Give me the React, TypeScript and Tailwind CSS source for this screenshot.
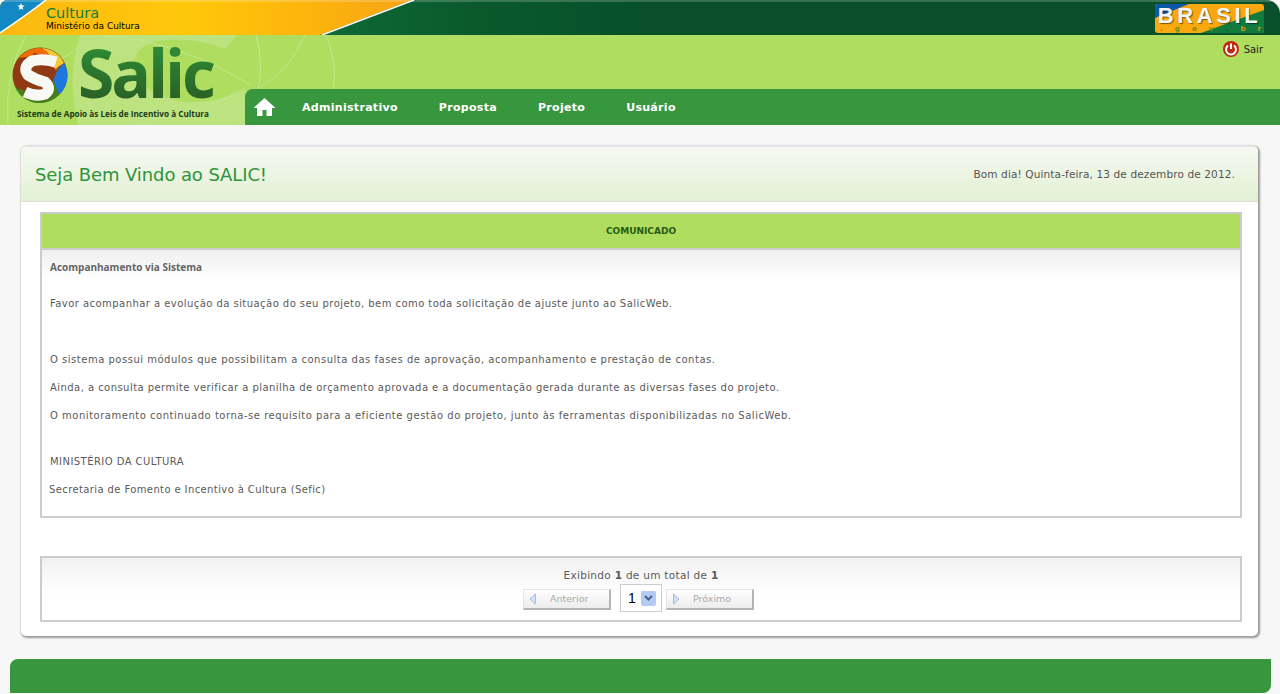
const font = { fontFamily: '"DejaVu Sans", Verdana, sans-serif' };
const openSans = { fontFamily: '"Open Sans", sans-serif' };

const TopBanner = () => (
  <div className="relative h-[35px] bg-[#07502a] overflow-hidden flex justify-between rounded-tl-[8px] rounded-tr-[14px]">
    <svg className="absolute left-0 top-0" width="640" height="35" viewBox="0 0 640 35">
      <defs>
        <linearGradient id="ouro" x1="0" y1="0" x2="1" y2="0">
          <stop offset="0" stopColor="#fbb812" />
          <stop offset="0.45" stopColor="#ffc80a" />
          <stop offset="0.75" stopColor="#fdb40c" />
          <stop offset="1" stopColor="#f7a414" />
        </linearGradient>
        <linearGradient id="mata" x1="0" y1="0" x2="1" y2="0">
          <stop offset="0" stopColor="#0f6a36" />
          <stop offset="0.45" stopColor="#0a5a2d" />
          <stop offset="1" stopColor="#07502a" />
        </linearGradient>
      </defs>
      <path d="M412 0H640V35H324Z" fill="url(#mata)" />
      <path d="M0 0H412L320 35H0Z" fill="url(#ouro)" />
      <path d="M414 0L322 35" stroke="#fff" strokeWidth="1.5" fill="none" />
      <path d="M0 33V0H46Q28 14 0 33Z" fill="#1389c4" />
      <path d="M46 0Q28 14 0 33" stroke="#fff" strokeWidth="1.5" fill="none" />
      <path d="M21 3l1 2.600 2.700 0-2.200 1.700 .8 2.700-2.300-1.600-2.300 1.600 .8-2.700-2.200-1.700 2.700 0z" fill="#fff" />
    </svg>
    <div className="absolute left-0 right-0 top-0 h-[2px] bg-white/20" />
    <div className="relative ml-[46px] mt-[5px] flex flex-col">
      <span className="text-[14.500px] leading-[16px] text-[#0f7d3c]" style={font}>Cultura</span>
      <span className="text-[9px] leading-[10px] text-black" style={font}>Ministério da Cultura</span>
    </div>
    <div className="relative mr-[16px] mt-[4px] w-[109px] h-[29px] rounded-[3px] overflow-hidden bg-[#f9a90f]">
      <svg className="absolute inset-0" width="109" height="29" viewBox="0 0 109 29">
        <path d="M0 0H34L0 14Z" fill="#0b58a8" />
        <path d="M109 6V29H46Z" fill="#127a3d" />
      </svg>
      <div className="absolute left-0 right-0 top-[2px] text-center text-[22px] leading-[20px] font-bold tracking-[3.600px] text-[#eef6fb] [text-shadow:1px_1px_1px_#00000080]" style={{ fontFamily: '"Liberation Sans", sans-serif' }}>BRASIL</div>
      <div className="absolute left-[5px] right-[3px] bottom-0 flex justify-between text-[7px] leading-[7px] font-bold text-[#6f8a12]" style={font}>
        <span>.</span><span>g</span><span>o</span><span>v</span><span className="text-[#12542b]">.</span><span className="text-[#d09a14]">b</span><span className="text-[#d09a14]">r</span>
      </div>
    </div>
  </div>
);

const SalicLogo = () => (
  <svg className="shrink-0" width="56" height="56" viewBox="0 0 56 56">
    <circle cx="28" cy="28" r="27.500" fill="#8f3a14" />
    <path d="M7 11A27 27 0 0 1 30 1Q18 4 22 12L44 22Q36 6 7 11Z" fill="#f06c08" />
    <path d="M14 5A27 27 0 0 1 50 13L44 24Q38 6 14 5Z" fill="#f06c08" />
    <path d="M30 1A27 27 0 0 1 52 16L43 22Q42 8 30 1Z" fill="#f2cb35" />
    <path d="M55.500 28A27 27 0 0 1 47 48L41 34L46 22L52 16A27 27 0 0 1 55.500 28Z" fill="#1d78de" />
    <path d="M3 40A27 27 0 0 0 47 48L42 34Q40 44 30 44Q14 46 3 40Z" fill="#46801a" />
    <path d="M44 15Q30 11 20 14Q10 20 16 28Q24 33 33 35Q40 42 33 47Q24 50 13 45" fill="none" stroke="#f8f8f4" strokeWidth="11" />
  </svg>
);

const Header = () => (
  <div className="relative h-[90px] bg-[#aedd5f] overflow-hidden">
    <svg className="absolute left-0 top-0" width="340" height="90" viewBox="0 0 340 90">
      <path d="M80 0Q66 45 78 90H250V0Z" fill="#bce380" />
      <path d="M132 32Q135 8 165 5Q200 3 225 14L237 0H340V55H245Q200 75 165 62Q135 50 132 32Z" fill="#aedd5f" />
      <g fill="none" stroke="#c4e78f" strokeWidth="1">
        <path d="M26 0Q4 40 8 90" />
        <path d="M305 0Q290 35 258 54" />
        <path d="M256 0Q264 30 258 54" />
        <path d="M326 0Q338 30 333 54" />
        <path d="M245 53Q200 80 140 86" />
        <path d="M100 0Q180 6 250 50" />
        <path d="M60 25Q72 18 80 10" />
      </g>
    </svg>
    <div className="relative flex items-start h-full">
      <div className="flex flex-col w-[245px] shrink-0 pl-[12px] pt-[12px]">
        <div className="flex items-start">
          <SalicLogo />
          <span className="ml-[10px] mt-[-10px] shrink-0 text-[66px] leading-[71px] font-bold tracking-[-3.100px] pr-[4px] bg-gradient-to-b from-[#2e9338] to-[#285a23] bg-clip-text text-transparent" style={openSans}>Salic</span>
        </div>
        <span className="ml-[5px] text-[8.200px] leading-[12px] font-bold text-[#1d3a1a] whitespace-nowrap" style={openSans}>Sistema de Apoio às Leis de Incentivo à Cultura</span>
      </div>
      <div className="flex-1 flex flex-col h-full">
        <div className="h-[54px] flex justify-end items-start pt-[6px] pr-[17px] gap-[5px]">
          <svg width="16" height="16" viewBox="0 0 16 16">
            <circle cx="8" cy="8" r="8" fill="#c0290f" />
            <path d="M5 4.500A5 5 0 1 0 11 4.500" fill="none" stroke="#fff" strokeWidth="2" />
            <path d="M8 2.500V8" stroke="#fff" strokeWidth="2" />
          </svg>
          <span className="text-[10px] leading-[18px] text-[#222]" style={font}>Sair</span>
        </div>
        <nav className="h-[36px] pt-[2px] bg-[#38963f] rounded-tl-[8px] flex items-center text-white text-[11px] font-bold tracking-[0.300px]" style={font}>
          <svg className="ml-[8px] mb-[2px]" width="23" height="20" viewBox="0 0 23 20">
            <path d="M11.500 1L0.500 11H4V19H9.500V13H13.500V19H19V11H22.500Z" fill="#fff" />
          </svg>
          <span className="ml-[26px]">Administrativo</span>
          <span className="ml-[41px]">Proposta</span>
          <span className="ml-[41px]">Projeto</span>
          <span className="ml-[41px]">Usuário</span>
        </nav>
      </div>
    </div>
  </div>
);

const NavButton = ({ label, dir }: { label: string; dir: "prev" | "next" }) => (
  <div className="w-[88px] h-[21px] mt-[5px] bg-gradient-to-b from-white to-[#ececec] border-r-2 border-b-2 border-[#b5b5b5] border-l border-t border-l-[#e4e4e4] border-t-[#e4e4e4] flex items-center text-[9.500px] text-[#aaa]" style={font}>
    <svg className="ml-[5px]" width="8" height="12" viewBox="0 0 8 12">
      <path d={dir === "prev" ? "M6.500 1V11L1 6Z" : "M1.500 1V11L7 6Z"} fill="#d4e4f7" stroke="#9dbde4" />
    </svg>
    <span className="ml-[13px]">{label}</span>
  </div>
);

const Comunicado = () => (
  <div className="border-2 border-[#cccccc] bg-white text-[10px] text-[#5a5a5a] tracking-[0.450px]" style={font}>
    <div className="h-[36px] pt-px bg-[#aedd5f] border-b-2 border-[#cccccc] flex items-center justify-center font-bold text-[#275a12] text-[9px] tracking-normal">COMUNICADO</div>
    <div className="h-[266px] bg-gradient-to-b from-[#efefef] from-0% to-white to-[12%] px-[8px] flex flex-col">
      <p className="mt-[10px] leading-[14px] font-bold text-[10px] tracking-normal text-[#666]" style={openSans}>Acompanhamento via Sistema</p>
      <p className="mt-[23px] leading-[14px]">Favor acompanhar a evolução da situação do seu projeto, bem como toda solicitação de ajuste junto ao SalicWeb.</p>
      <p className="mt-[42px] leading-[14px] tracking-[0.510px]">O sistema possui módulos que possibilitam a consulta das fases de aprovação, acompanhamento e prestação de contas.</p>
      <p className="mt-[14px] leading-[14px]">Ainda, a consulta permite verificar a planilha de orçamento aprovada e a documentação gerada durante as diversas fases do projeto.</p>
      <p className="mt-[14px] leading-[14px] tracking-[0.520px]">O monitoramento continuado torna-se requisito para a eficiente gestão do projeto, junto às ferramentas disponibilizadas no SalicWeb.</p>
      <p className="mt-[32px] leading-[14px]">MINISTÉRIO DA CULTURA</p>
      <p className="mt-[14px] leading-[14px] -ml-px tracking-[0.390px]">Secretaria de Fomento e Incentivo à Cultura (Sefic)</p>
    </div>
  </div>
);

const Pagination = () => (
  <div className="mt-[38px] h-[66px] border-2 border-[#cccccc] bg-gradient-to-b from-[#f1f1f1] to-white to-60% flex flex-col items-center" style={font}>
    <p className="mt-[10px] text-[10.500px] leading-[14px] text-[#5a5a5a] tracking-[0.300px]">Exibindo <b>1</b> de um total de <b>1</b></p>
    <div className="flex items-start mt-[2px] ml-[-5px]">
      <NavButton label="Anterior" dir="prev" />
      <div className="ml-[9px] mr-[4px] w-[42px] h-[28px] border border-[#cccccc] bg-white flex items-center pl-[7px] gap-[5px]">
        <span className="text-[14px] text-black" style={{ fontFamily: '"Liberation Sans", sans-serif' }}>1</span>
        <div className="w-[15px] h-[15px] rounded-[2px] bg-[#b2cbf5] flex items-center justify-center">
          <svg width="9" height="6" viewBox="0 0 9 6"><path d="M1 1L4.500 4.500L8 1" fill="none" stroke="#4d6185" strokeWidth="2" /></svg>
        </div>
      </div>
      <NavButton label="Próximo" dir="next" />
    </div>
  </div>
);

export default function App() {
  return (
    <div className="h-[694px] bg-[#f7f7f7] overflow-hidden flex flex-col">
      <TopBanner />
      <Header />
      <main className="mt-[21px] ml-[21px] mr-[22px] h-[490px] bg-white rounded-[5px] border-t border-[#e6e6e6] shadow-[1px_1px_2px_1px_#9a9a9a]">
        <div className="h-[55px] rounded-t-[5px] bg-gradient-to-b from-[#f6f9f2] to-[#e2f0d3] border-b border-[#dcdcdc] flex items-center justify-between pl-[14px] pr-[23px]">
          <h1 className="text-[18px] text-[#2f9439] tracking-[-0.100px]" style={font}>Seja Bem Vindo ao SALIC!</h1>
          <span className="pt-px text-[10.500px] text-[#555] tracking-[0.130px]" style={font}>Bom dia! Quinta-feira, 13 de dezembro de 2012.</span>
        </div>
        <div className="mt-[10px] ml-[19px] mr-[16px]">
          <Comunicado />
          <Pagination />
        </div>
      </main>
      <footer className="mt-[23px] ml-[10px] mr-[9px] h-[34px] bg-[#38963f] rounded-tl-[8px] rounded-br-[8px]" />
    </div>
  );
}
